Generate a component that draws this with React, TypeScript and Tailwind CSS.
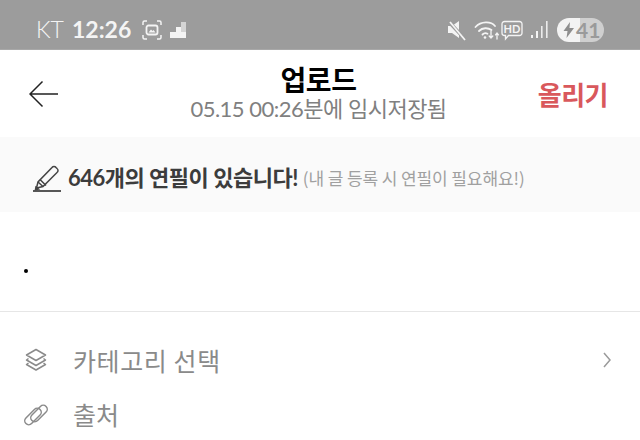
const kr = { fontFamily: '"Noto Sans CJK KR", sans-serif' };
const lato = { fontFamily: 'Lato, "Noto Sans CJK KR", sans-serif' };

function StatusLeft() {
  return (
    <div className="flex items-center text-[#f4f4f4]" style={lato}>
      <span className="w-[36px] text-[23px] leading-none font-light">KT</span>
      <span className="text-[23px] leading-none font-bold">12:26</span>
      <svg className="ml-[10px]" width="22" height="22" viewBox="0 0 22 22" fill="none" stroke="#f4f4f4" strokeWidth="1.500">
        <path d="M2 6V3.500A1.500 1.500 0 0 1 3.500 2H6M16 2h2.500A1.500 1.500 0 0 1 20 3.500V6M20 16v2.500a1.500 1.500 0 0 1-1.500 1.500H16M6 20H3.500A1.500 1.500 0 0 1 2 18.500V16" />
        <rect x="5.500" y="6.500" width="11" height="9" rx="2" strokeWidth="1.800" />
        <path d="M7.500 13.500l2.500-3 1.500 1.500 1-1 2 2.500z" fill="#f4f4f4" stroke="none" />
      </svg>
      <svg className="ml-[6px]" width="18" height="18" viewBox="0 0 18 18">
        <path d="M1 17v-6h6V6h5v11z" fill="#f4f4f4" />
        <rect x="12" y="1" width="5" height="10" fill="#d4d4d4" />
        <rect x="12" y="11" width="5" height="6" fill="#f4f4f4" />
      </svg>
    </div>
  );
}

function StatusRight() {
  return (
    <div className="flex items-center text-[#f4f4f4]">
      <svg width="20" height="22" viewBox="0 0 20 22">
        <path d="M1 7h4l7-5v17l-7-5H1z" fill="#f4f4f4" />
        <path d="M1 2l17 18" stroke="#9c9c9c" strokeWidth="3.500" />
        <path d="M3 3l15 18" stroke="#f4f4f4" strokeWidth="1.800" />
      </svg>
      <svg className="ml-[7px]" width="26" height="22" viewBox="0 0 26 22" fill="none" stroke="#f4f4f4" strokeWidth="1.800" strokeLinecap="round">
        <path d="M1.500 8C7 2 17 2 21 7" />
        <path d="M5 12c3.500-3.500 9-3.500 12.500-1" />
        <path d="M8.500 15.500c1.500-1.500 3.500-1.500 5-.8" />
        <circle cx="11" cy="18.500" r="1.300" fill="#f4f4f4" stroke="none" />
        <path d="M17 12v7m-1.800-2l1.800 2 1.800-2M23 20v-6m-1.500 1.800L23 14l1.500 1.800" strokeWidth="1.300" />
      </svg>
      <svg className="ml-[1px]" width="22" height="22" viewBox="0 0 22 22" fill="none">
        <path d="M3.500 2.500h15a2.500 2.500 0 0 1 2.500 2.500v9a2.500 2.500 0 0 1-2.500 2.500h-11l-3 3.500v-3.500h-1A2.500 2.500 0 0 1 1 14V5a2.500 2.500 0 0 1 2.500-2.500z" stroke="#f4f4f4" strokeWidth="1.300" />
        <text x="11" y="14" textAnchor="middle" fontSize="11" fontWeight="700" fill="#f4f4f4" fontFamily="Lato, sans-serif">HD</text>
      </svg>
      <svg className="ml-[8px]" width="17" height="20" viewBox="0 0 17 20" fill="#f4f4f4">
        <rect x="0" y="15" width="2" height="3" />
        <rect x="5" y="11" width="2" height="7" />
        <rect x="10" y="6" width="1.600" height="12" opacity="0.9" />
        <rect x="15" y="1" width="1.600" height="17" opacity="0.9" />
      </svg>
      <div className="ml-[9px] flex h-[24px] w-[47px] items-center rounded-full bg-[linear-gradient(90deg,#f3f3f3_0,#f3f3f3_48%,#cfcfcf_48%,#cfcfcf_100%)]">
        <svg className="ml-[6px]" width="12" height="16" viewBox="0 0 12 16">
          <path d="M7 0L0.500 9h4l-1 7L11 6H6.500z" fill="#8e8e8e" />
        </svg>
        <span className="ml-[1px] text-[21px] leading-none font-bold text-[#9a9a9a]" style={lato}>41</span>
      </div>
    </div>
  );
}

function StackIcon() {
  return (
    <svg width="22" height="24" viewBox="0 0 22 24" fill="none" stroke="#8a8a8a" strokeWidth="1.500" strokeLinejoin="round">
      <path d="M11 1.500l9.500 5.500-9.500 5.500L1.500 7z" />
      <path d="M3.500 10.500L1.500 12l9.500 5.500 9.500-5.500-2-1.500" />
      <path d="M3.500 15L1.500 16.500l9.500 5.500 9.500-5.500-2-1.500" />
    </svg>
  );
}

function LinkIcon() {
  return (
    <svg width="24" height="24" viewBox="0 0 24 24" fill="none" stroke="#8a8a8a" strokeWidth="1.500">
      <rect x="-1" y="9.500" width="20" height="8" rx="4" transform="rotate(-45 9 13.500)" />
      <rect x="5" y="6.500" width="20" height="8" rx="4" transform="rotate(-45 15 10.500)" />
    </svg>
  );
}

export default function App() {
  return (
    <div className="flex h-[440px] w-[640px] flex-col overflow-hidden bg-white" style={kr}>
      <div className="flex h-[50px] shrink-0 items-center justify-between border-b border-[#a8a8a8] bg-[#9c9c9c] px-[36px] pt-[10px]">
        <StatusLeft />
        <StatusRight />
      </div>

      <header className="grid h-[87px] shrink-0 grid-cols-[1fr_auto_1fr] items-center pr-[32px] pl-[29px]">
        <svg width="30" height="28" viewBox="0 0 30 28" fill="none" stroke="#222" strokeWidth="1.500">
          <path d="M29 14H1M13.500 1.500L1 14l12.500 12.500" />
        </svg>
        <div className="flex flex-col items-center">
          <h1 className="text-[28px] leading-[30px] font-bold tracking-[-0.5px] text-black">업로드</h1>
          <p className="mt-[1px] text-[22px] leading-[28px] tracking-[-0.5px] text-[#808080]" style={lato}>05.15 00:26분에 임시저장됨</p>
        </div>
        <button className="justify-self-end text-[26px] leading-none font-bold tracking-[-0.5px] text-[#d9585c]" type="button">올리기</button>
      </header>

      <div className="flex h-[75px] shrink-0 items-center bg-[#fafafa] pt-[6px] pl-[32px]">
        <svg width="30" height="30" viewBox="0 0 30 30" fill="none" stroke="#444" strokeWidth="1.500">
          <path d="M4.500 25l1.500-6L20 4.500a2.500 2.500 0 0 1 4 0l1 1a2.500 2.500 0 0 1 0 4L11 23.500z" />
          <path d="M6 19l5 4.500M8 16.500l6 6" />
          <path d="M4 24l-.5 2.500 3-.5z" fill="#444" />
          <path d="M1 28h28" strokeWidth="1.800" />
        </svg>
        <strong className="ml-[6px] text-[22px] leading-none font-bold tracking-[-0.5px] text-[#3c3c3c]" style={lato}>646개의 연필이 있습니다!</strong>
        <span className="ml-[5px] text-[17px] leading-none tracking-[-0.1px] text-[#a0a0a0]">(내 글 등록 시 연필이 필요해요!)</span>
      </div>

      <div className="h-[100px] shrink-0 border-b border-[#e6e6e6] pt-[57px] pl-[24px]">
        <div className="h-[4px] w-[4px] rounded-full bg-black" />
      </div>

      <div className="mt-[23px] flex h-[50px] shrink-0 items-center pr-[29px] pl-[25px]">
        <StackIcon />
        <span className="ml-[26px] flex-1 text-[25px] leading-none tracking-[0.6px] text-[#8a8a8a]">카테고리 선택</span>
        <svg width="8" height="16" viewBox="0 0 8 16" fill="none" stroke="#9a9a9a" strokeWidth="1.500">
          <path d="M1 1l6 7-6 7" />
        </svg>
      </div>
      <div className="flex h-[59px] shrink-0 items-center pl-[24px]">
        <LinkIcon />
        <span className="ml-[25px] text-[25px] leading-none text-[#8a8a8a]">출처</span>
      </div>
    </div>
  );
}
